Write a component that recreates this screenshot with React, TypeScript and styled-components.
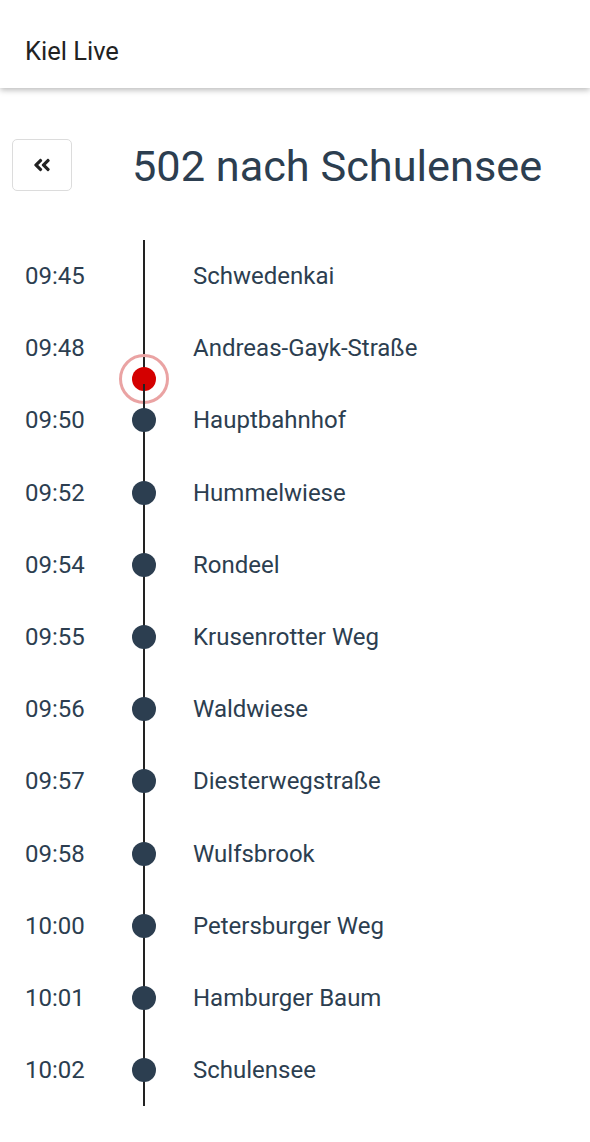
import React from 'react';
import styled, { createGlobalStyle } from 'styled-components';
import { FaAngleDoubleLeft } from 'react-icons/fa';

const GlobalStyle = createGlobalStyle`
  html, body {
    margin: 0;
    padding: 0;
    background: #fff;
    font-family: Roboto, "Liberation Sans", sans-serif;
  }
`;

const TEXT = '#2c3e50';

const AppBar = styled.header`
  height: 74px;
  display: flex;
  align-items: center;
  padding: 14px 25px 0 25px;
  background: #fff;
  box-shadow: 0 2px 6px rgba(0, 0, 0, 0.28);
  font-size: 25.5px;
  color: #222;
`;

const TitleRow = styled.div`
  display: flex;
  align-items: center;
  gap: 60px;
  padding: 50px 12px 0 12px;
`;

const BackButton = styled.button`
  width: 60px;
  height: 52px;
  border: 1px solid #dcdcdc;
  border-radius: 5px;
  background: #fff;
  color: #222;
  display: flex;
  align-items: center;
  justify-content: center;
  padding: 0;
  cursor: pointer;
`;

const Title = styled.h1`
  margin: 0;
  padding-top: 3px;
  font-size: 43.3px;
  font-weight: 400;
  color: ${TEXT};
`;

const StopList = styled.ol`
  list-style: none;
  margin: 48px 0 0 0;
  padding: 0;
`;

const StopRow = styled.li`
  display: grid;
  grid-template-columns: 143px 1fr;
  height: 72.2px;
  align-items: center;
  font-size: 24px;
  color: ${TEXT};
`;

const Time = styled.span`
  padding-left: 25px;
`;

const Name = styled.span`
  position: relative;
  height: 100%;
  display: flex;
  align-items: center;
  padding-left: 50px;

  &::before {
    content: '';
    position: absolute;
    left: 0;
    top: 0;
    bottom: 0;
    width: 2px;
    background: #222;
  }
`;

const Dot = styled.span`
  position: absolute;
  left: -11px;
  top: 50%;
  width: 24px;
  height: 24px;
  margin-top: -12px;
  border-radius: 50%;
  background: #2c3e50;
`;

const Vehicle = styled.span<{ $offset: number }>`
  position: absolute;
  left: -24px;
  top: ${p => p.$offset - 25}px;
  width: 44px;
  height: 44px;
  border-radius: 50%;
  border: 3px solid #eaa3a3;
  display: flex;
  align-items: center;
  justify-content: center;

  &::after {
    content: '';
    width: 24px;
    height: 24px;
    border-radius: 50%;
    background: #d40000;
  }
`;

const stops = [
  { time: '09:45', name: 'Schwedenkai', passed: true },
  { time: '09:48', name: 'Andreas-Gayk-Straße', passed: true, vehicle: 67 },
  { time: '09:50', name: 'Hauptbahnhof' },
  { time: '09:52', name: 'Hummelwiese' },
  { time: '09:54', name: 'Rondeel' },
  { time: '09:55', name: 'Krusenrotter Weg' },
  { time: '09:56', name: 'Waldwiese' },
  { time: '09:57', name: 'Diesterwegstraße' },
  { time: '09:58', name: 'Wulfsbrook' },
  { time: '10:00', name: 'Petersburger Weg' },
  { time: '10:01', name: 'Hamburger Baum' },
  { time: '10:02', name: 'Schulensee' },
];

export default function App() {
  return (
    <>
      <GlobalStyle />
      <AppBar>Kiel Live</AppBar>
      <TitleRow>
        <BackButton aria-label="Zurück">
          <FaAngleDoubleLeft size={20} />
        </BackButton>
        <Title>502 nach Schulensee</Title>
      </TitleRow>
      <StopList>
        {stops.map(stop => (
          <StopRow key={stop.time}>
            <Time>{stop.time}</Time>
            <Name>
              {!stop.passed && <Dot />}
              {stop.vehicle !== undefined && <Vehicle $offset={stop.vehicle} />}
              {stop.name}
            </Name>
          </StopRow>
        ))}
      </StopList>
    </>
  );
}
